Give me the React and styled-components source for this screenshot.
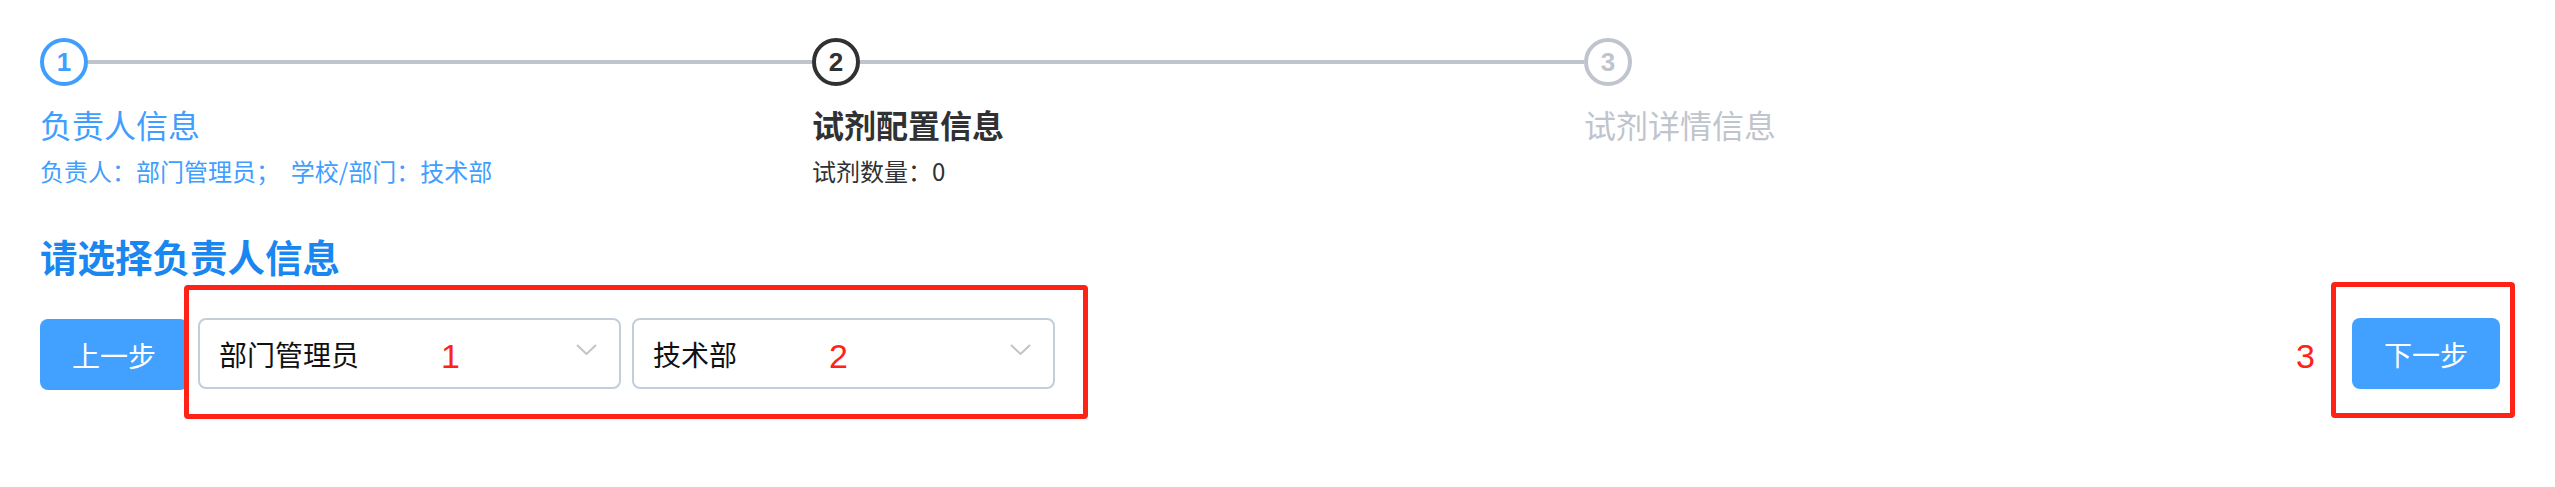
import React from "react";
import styled, { createGlobalStyle } from "styled-components";

const Global = createGlobalStyle`
  html, body { margin: 0; padding: 0; background: #fff; }
  body { font-family: "Noto Sans CJK SC", "Liberation Sans", sans-serif; }
  * { box-sizing: border-box; }
`;

const Page = styled.div`
  padding: 38px 55px 0 40px;
  width: 2555px;
  height: 487px;
  position: relative;
`;

const Steps = styled.div`
  display: flex;
  width: 1736px;
`;

const Step = styled.div`
  display: flex;
  flex-direction: column;
  flex: ${(p) => (p.$last ? "none" : "1 1 0")};
  color: ${(p) => p.$color};
`;

const StepHead = styled.div`
  display: flex;
  align-items: center;
  height: 48px;
`;

const StepIcon = styled.div`
  width: 48px;
  height: 48px;
  border-radius: 50%;
  border: 4px solid currentColor;
  display: flex;
  align-items: center;
  justify-content: center;
  font-family: "Liberation Sans", Arial, sans-serif;
  font-weight: 700;
  font-size: 26px;
  flex: none;
`;

const StepLine = styled.div`
  flex: 1;
  height: 4px;
  background: #c0c4cc;
`;

const StepTitle = styled.div`
  margin-top: 16px;
  font-size: 32px;
  line-height: 44px;
  font-weight: ${(p) => (p.$active ? 700 : 400)};
  white-space: nowrap;
`;

const StepDesc = styled.div`
  margin-top: 9px;
  font-size: 24px;
  line-height: 32px;
  white-space: pre;
`;

const Heading = styled.h3`
  margin: 45px 0 0;
  font-size: 37.5px;
  line-height: 48px;
  font-weight: 700;
  color: #1a86f0;
`;

const Row = styled.div`
  margin-top: 37px;
  display: flex;
  align-items: center;
  justify-content: space-between;
`;

const Left = styled.div`
  display: flex;
  align-items: center;
`;

const Button = styled.button`
  width: 148px;
  height: 71px;
  border: none;
  border-radius: 8px;
  background: #42a0ff;
  color: #fff;
  font-family: "Noto Sans CJK SC", sans-serif;
  font-size: 28px;
  padding: 0;
  cursor: pointer;
  margin-top: ${(p) => p.$dy || 0}px;
`;

const SelectGroup = styled.div`
  position: relative;
  display: flex;
  gap: 11px;
  margin-left: 10px;
`;

const Select = styled.div`
  width: 423px;
  height: 71px;
  border: 2px solid #c3cedb;
  border-radius: 8px;
  display: flex;
  align-items: center;
  justify-content: space-between;
  padding: 0 22px 0 19px;
  font-size: 28px;
  color: #111;
  background: #fff;
`;

const Chevron = styled.svg`
  width: 21px;
  height: 11px;
  margin-top: -8px;
`;

const NextWrap = styled.div`
  position: relative;
`;

const RedBox = styled.div`
  position: absolute;
  top: ${(p) => p.$t}px;
  left: ${(p) => p.$l}px;
  right: ${(p) => p.$r}px;
  bottom: ${(p) => p.$b}px;
  border: 5px solid #ff2216;
  border-radius: 4px;
  pointer-events: none;
`;

const Mark = styled.span`
  position: absolute;
  left: ${(p) => p.$x}px;
  top: ${(p) => p.$y}px;
  font-family: "Liberation Sans", Arial, sans-serif;
  font-size: 34px;
  line-height: 34px;
  color: #ff2216;
`;

const Arrow = () => (
  <Chevron viewBox="0 0 21 11">
    <polyline points="1,1 10.5,10 20,1" fill="none" stroke="#c0c4cc" strokeWidth="2" />
  </Chevron>
);

const steps = [
  { n: 1, title: "负责人信息", desc: "负责人：部门管理员；  学校/部门：技术部", color: "#409eff" },
  { n: 2, title: "试剂配置信息", desc: "试剂数量：0", color: "#303133", active: true },
  { n: 3, title: "试剂详情信息", color: "#c0c4cc" },
];

export default function App() {
  return (
    <>
      <Global />
      <Page>
        <Steps>
          {steps.map((s, i) => {
            const last = i === steps.length - 1;
            return (
              <Step key={s.n} $last={last} $color={s.color}>
                <StepHead>
                  <StepIcon>{s.n}</StepIcon>
                  {!last && <StepLine />}
                </StepHead>
                <StepTitle $active={s.active}>{s.title}</StepTitle>
                {s.desc && <StepDesc>{s.desc}</StepDesc>}
              </Step>
            );
          })}
        </Steps>
        <Heading>请选择负责人信息</Heading>
        <Row>
          <Left>
            <Button $dy={2}>上一步</Button>
            <SelectGroup>
              <Select>
                <span>部门管理员</span>
                <Arrow />
              </Select>
              <Select>
                <span>技术部</span>
                <Arrow />
              </Select>
              <RedBox $t={-33} $l={-14} $r={-33} $b={-30} />
              <Mark $x={243} $y={21}>1</Mark>
              <Mark $x={631} $y={21}>2</Mark>
            </SelectGroup>
          </Left>
          <NextWrap>
            <Button>下一步</Button>
            <RedBox $t={-36} $l={-21} $r={-15} $b={-29} />
            <Mark $x={-56} $y={21}>3</Mark>
          </NextWrap>
        </Row>
      </Page>
    </>
  );
}
